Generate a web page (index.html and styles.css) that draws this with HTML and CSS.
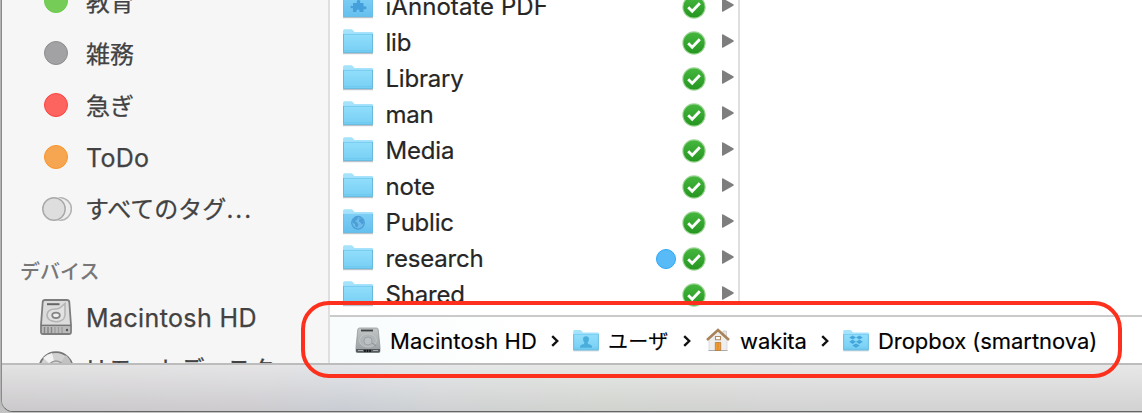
FILE: index.html
```html
<!DOCTYPE html>
<html lang="ja">
<head>
<meta charset="utf-8">
<title>Finder</title>
<link rel="stylesheet" href="styles.css">
</head>
<body>
<svg class="defs" aria-hidden="true">
  <defs>
    <linearGradient id="fg" x1="0" y1="0" x2="0" y2="1"><stop offset="0" stop-color="#92defb"/><stop offset="1" stop-color="#75cff4"/></linearGradient>
    <linearGradient id="fb" x1="0" y1="0" x2="0" y2="1"><stop offset="0" stop-color="#7ccef5"/><stop offset="1" stop-color="#65c0ee"/></linearGradient>
    <linearGradient id="gg" x1="0" y1="0" x2="0" y2="1"><stop offset="0" stop-color="#45b63d"/><stop offset="1" stop-color="#259620"/></linearGradient>
    <linearGradient id="metal" x1="0" y1="0" x2="0" y2="1"><stop offset="0" stop-color="#c2c6c7"/><stop offset="1" stop-color="#989d9e"/></linearGradient>
    <symbol id="folder" viewBox="0 0 32 27">
      <path d="M1 25.5h30" stroke="#b9c3c9" stroke-width="1.4"/>
      <path d="M1 3Q1 1.3 2.5 1.3H9Q10.2 1.3 11 2.3L12.4 4H30Q31 4 31 5V24.5H1Z" fill="#a5e2fc"/>
      <path d="M1 6.2H31V24Q31 25 30 25H2Q1 25 1 24Z" fill="url(#fg)"/>
      <path d="M1.5 6V24.4H30.5V6" fill="none" stroke="#68b9de"/><path d="M2 6.4H30M2 22.5H30" stroke="#6ec6ed" stroke-width=".8"/>
    </symbol>
    <symbol id="check" viewBox="0 0 24 24">
      <circle cx="12" cy="12" r="11.7" fill="#9bd494"/><circle cx="12" cy="12" r="10.6" fill="url(#gg)"/>
      <path d="M6.2 12.3l4 3.9 7.6-7.9" fill="none" stroke="#fff" stroke-width="2.9"/>
    </symbol>
    <symbol id="arrow" viewBox="0 0 12 14"><path d="M0 .7Q0 0 .8.3L11.3 6.3Q12.2 7 11.3 7.7L.8 13.7Q0 14 0 13.3Z" fill="#7e7e7e"/></symbol>
    <symbol id="chev" viewBox="0 0 8 12"><path d="M1.2 1.2L6.2 6 1.2 10.8" fill="none" stroke="#111" stroke-width="2.4"/></symbol>
  </defs>
</svg>
<div class="window">
  <div class="panes">
    <aside class="sidebar">
      <div class="item"><i class="tag green"></i><span class="cjk">教育</span></div>
      <div class="item"><i class="tag gray"></i><span class="cjk">雑務</span></div>
      <div class="item"><i class="tag red"></i><span class="cjk">急ぎ</span></div>
      <div class="item"><i class="tag orange"></i><span class="todo">ToDo</span></div>
      <div class="item"><svg class="alltags" viewBox="0 0 30 24"><circle cx="18.2" cy="12" r="11.2" fill="#ececec" stroke="#b2b2b2" stroke-width="1.5"/><circle cx="12" cy="12" r="12.5" fill="#f6f6f6"/><circle cx="12" cy="12" r="11.2" fill="#dedede" stroke="#a9a9a9" stroke-width="1.5"/></svg><span class="cjk all">すべてのタグ<span class="dots">...</span></span></div>
      <div class="heading">デバイス</div>
      <div class="item device">
        <svg class="drive" viewBox="0 0 32 36"><path d="M5 1H27Q29 1 29.3 3L31 26V33Q31 35 29 35H3Q1 35 1 33V26L2.7 3Q3 1 5 1Z" fill="#dcdcdc" stroke="#7d7d7d" stroke-width="1.8"/><path d="M1 26.5H31" stroke="#777" stroke-width="1.8"/><path d="M2 27.5H30V34H2Z" fill="#b9b9b9"/><path d="M4.5 28V34M8 28V34M11.5 28V34" stroke="#858585" stroke-width="1.4"/><path d="M15 28V34M18.5 28V34M22 28V34" stroke="#9a9a9a" stroke-width="1.2"/><path d="M7 5.2H19.5" stroke="#666" stroke-width="2"/><path d="M25 4.5V16Q24.5 22.5 16 22.8Q7 22 7 16Q7.5 9.8 16 10Q19 10 21 8Z" fill="#e2e2e2" stroke="#b4b4b4" stroke-width="1.6"/><ellipse cx="16" cy="16.3" rx="3.8" ry="2.7" fill="#eee" stroke="#858585" stroke-width="1.8"/><circle cx="27" cy="31" r="1.2" fill="#555"/></svg>
        <span class="hd">Macintosh HD</span></div>
      <div class="item device remote">
        <svg class="disc" viewBox="0 0 36 36"><circle cx="18" cy="18" r="16.8" fill="#d1d1d1" stroke="#777" stroke-width="1.8"/><path d="M18 18L5 7Q9 3 14 2Z" fill="#f2f2f2"/><path d="M18 18L28 4Q32 8 33 12Z" fill="#c2c2c2"/><circle cx="18" cy="18" r="8" fill="#d8d8d8" stroke="#999" stroke-width="1.5"/><circle cx="18" cy="18" r="5" fill="#f6f6f6" stroke="#888" stroke-width="1.5"/></svg>
        <span class="cjk">リモートディスク</span></div>
    </aside>
    <main class="browser">
      <div class="columns">
        <div class="files">
          <div class="row"><svg class="folder" viewBox="0 0 32 27"><use href="#folder"/><path d="M1.5 6H30.5V24.4H1.5Z" fill="url(#fb)"/><path d="M11 11h4q-1-3 1.5-3t1.5 3h3.5v3.5q3-1 3 1.2t-3 1.3V20h-4q.5-2.5-1.5-2.5T14.5 20H11v-4q-2.5 1-2.5-1T11 14.2Z" fill="#459fdb"/></svg><span class="name first">iAnnotate PDF</span><svg class="ok"><use href="#check"/></svg><svg class="arrow"><use href="#arrow"/></svg></div>
          <div class="row"><svg class="folder"><use href="#folder"/></svg><span class="name">lib</span><svg class="ok"><use href="#check"/></svg><svg class="arrow"><use href="#arrow"/></svg></div>
          <div class="row"><svg class="folder"><use href="#folder"/></svg><span class="name">Library</span><svg class="ok"><use href="#check"/></svg><svg class="arrow"><use href="#arrow"/></svg></div>
          <div class="row"><svg class="folder"><use href="#folder"/></svg><span class="name">man</span><svg class="ok"><use href="#check"/></svg><svg class="arrow"><use href="#arrow"/></svg></div>
          <div class="row"><svg class="folder"><use href="#folder"/></svg><span class="name">Media</span><svg class="ok"><use href="#check"/></svg><svg class="arrow"><use href="#arrow"/></svg></div>
          <div class="row"><svg class="folder"><use href="#folder"/></svg><span class="name">note</span><svg class="ok"><use href="#check"/></svg><svg class="arrow"><use href="#arrow"/></svg></div>
          <div class="row"><svg class="folder" viewBox="0 0 32 27"><use href="#folder"/><path d="M1.5 6.5H30.5V24.4H1.5Z" fill="url(#fb)"/><circle cx="16" cy="14.800" r="6.300" fill="#6dbbea" stroke="#4a9fd6" stroke-width="1.300"/><path d="M10.500 12L14 9l2 .5-1 2.500-2 1 2 1.500 1.500 2-1.500 3-1.500-.5-.5-3-2.500-1.500ZM17.500 10l3.500 1.500.8 3.500-2 1.500-1.300-2-1.500-1Z" fill="#4a9fd6"/></svg><span class="name">Public</span><svg class="ok"><use href="#check"/></svg><svg class="arrow"><use href="#arrow"/></svg></div>
          <div class="row"><svg class="folder"><use href="#folder"/></svg><span class="name">research</span><i class="dot"></i><svg class="ok"><use href="#check"/></svg><svg class="arrow"><use href="#arrow"/></svg></div>
          <div class="row"><svg class="folder"><use href="#folder"/></svg><span class="name">Shared</span><svg class="ok"><use href="#check"/></svg><svg class="arrow"><use href="#arrow"/></svg></div>
        </div>
      </div>
      <nav class="path">
        <svg class="pdrive" viewBox="0 0 26 26"><path d="M4.500 1H21.500Q23 1 23.200 2.500L25 20V24Q25 25.500 23.500 25.500H2.500Q1 25.500 1 24V20L2.800 2.500Q3 1 4.500 1Z" fill="url(#metal)" stroke="#92999b" stroke-width=".8"/><path d="M6 3.500H18" stroke="#3c4041" stroke-width="1.800"/><ellipse cx="13" cy="13.500" rx="8.500" ry="6.500" fill="#b0b6b7" stroke="#c4c9ca" stroke-width=".8"/><circle cx="13" cy="14" r="4" fill="#bcc1c2" stroke="#979d9f" stroke-width=".8"/><path d="M17 16L21 19" stroke="#8a9092" stroke-width="1"/><path d="M1 22H25V24Q25 25.500 23.500 25.500H2.500Q1 25.500 1 24Z" fill="#555b5d"/><path d="M3 23.500H8M18 23.500H23" stroke="#a8adae"/><path d="M10 22.700V25M12.500 22.700V25M15 22.700V25" stroke="#111" stroke-width="1.500"/></svg>
        <span class="phd">Macintosh HD</span>
        <svg class="chev c1"><use href="#chev"/></svg>
        <svg class="pfolder" viewBox="0 0 32 27"><use href="#folder"/><path d="M9 22V20.500Q9 18.500 13.500 17.500L14.200 16Q12.200 14 12.500 11Q12.800 8.500 16 8.500T19.500 11Q19.800 14 17.800 16L18.500 17.500Q23 18.500 23 20.500V22Z" fill="#4aaedb"/></svg>
        <span class="pusers">ユーザ</span>
        <svg class="chev c2"><use href="#chev"/></svg>
        <svg class="house" viewBox="0 0 24 24"><path d="M17 3H20.500V10H17Z" fill="#e8e8e8" stroke="#c4c4c4" stroke-width=".7"/><path d="M3 11L12 3 21 11V22.500H3Z" fill="#eeeeef" stroke="#cfcfcf" stroke-width=".6"/><path d="M2.500 22.500H21.500" stroke="#aaa"/><path d="M1 12L12 2 23 12" fill="none" stroke="#a98359" stroke-width="2.600"/><path d="M9.500 8.500H14.500V11.800H9.500Z" fill="#fff" stroke="#ae8d66" stroke-width="1.100"/><path d="M9.300 14.500H14.700V22.500H9.300Z" fill="#f29b30" stroke="#b47b3b" stroke-width=".8"/><path d="M12 14.500V22" stroke="#cf8127" stroke-width=".7"/></svg>
        <span class="pwakita">wakita</span>
        <svg class="chev c3"><use href="#chev"/></svg>
        <svg class="pfolder" viewBox="0 0 32 27"><use href="#folder"/><path d="M12 7.500l4 2.400-4 2.500-4-2.500ZM20 7.500l4 2.400-4 2.500-4-2.500ZM12 12.700l4 2.400-4 2.500-4-2.500ZM20 12.700l4 2.400-4 2.500-4-2.500ZM16 17l4.500 2.300L16 22l-4.500-2.700Z" fill="#45a6dc"/></svg>
        <span class="pdrop">Dropbox (smartnova)</span>
      </nav>
    </main>
  </div>
  <footer class="status"></footer>
</div>
<div class="highlight"></div>
</body>
</html>
```
FILE: styles.css
```css
* { box-sizing: border-box; }
html, body { margin: 0; height: 413px; overflow: hidden; }
body { background: linear-gradient(#b4b4b4, #b4b4b4 395px, #c4c4c4); font-family: Inter, "Noto Sans CJK JP", sans-serif; position: relative; }
svg { display: block; flex: none; }
.defs { position: absolute; width: 0; height: 0; }
.window { height: 412px; margin-left: 1px; border-left: 1px solid #8b8b8b; border-bottom: 1px solid #666; border-bottom-left-radius: 12px; overflow: hidden; background: #d5d5d6; }
.panes { display: flex; height: 363px; }
.sidebar { width: 328px; flex: none; border-right: 2px solid #dfdfdf; background: #f6f6f6; overflow: hidden; color: #424242; font-size: 25px; }
.item { display: flex; align-items: center; height: 52px; padding-left: 42px; white-space: nowrap; }
.item:first-child { margin-top: -25px; }
.item > span { line-height: 36px; -webkit-text-stroke: .25px; }
.item .todo, .item .hd { padding-top: 2px; }
.hd { letter-spacing: .38px; }
.todo { letter-spacing: .3px; }
.cjk { font-family: "Noto Sans CJK JP", sans-serif; font-size: 24px; }
.item .all { margin-left: -1px; }
.dots { font-family: Inter, sans-serif; letter-spacing: 2px; }
.remote .cjk { letter-spacing: .15px; margin-top: -2px; }
.tag { width: 24px; height: 24px; border-radius: 50%; border: 1.5px solid; margin-right: 18px; flex: none; }
.green { background: #75cd58; border-color: #67cb4a; }
.gray { background: #a2a2a4; border-color: #8d8d90; }
.red { background: #fd645f; border-color: #fd433e; }
.orange { background: #f6a550; border-color: #fa9528; }
.alltags { width: 30px; height: 24px; margin: 0 14px 0 0; }
.item .alltags { margin-left: -2px; }
.heading { height: 56px; padding: 18px 0 0 18px; font: 500 20px/36px "Noto Sans CJK JP", sans-serif; color: #777; }
.drive { width: 32px; height: 36px; margin: 0 14px 0 -4px; }
.disc { width: 36px; height: 36px; margin: 0 10px 0 -6px; }
.browser { flex: 1; min-width: 0; display: flex; flex-direction: column; background: #fff; }
.columns { height: 315px; overflow: hidden; }
.files { width: 410px; height: 315px; border-right: 2px solid #dfdfdf; }
.row { display: flex; align-items: center; height: 36px; padding: 0 4px 0 13px; }
.row:first-child { margin-top: -12px; }
.folder { width: 32px; height: 27px; margin: -1px 11.500px 0 -1px; }
.name { flex: 1; font-size: 24px; line-height: 34px; padding-top: 2px; letter-spacing: -.2px; color: #262626; white-space: nowrap; -webkit-text-stroke: .2px; }
.first { letter-spacing: .05px; }
.dot { width: 20px; height: 20px; border-radius: 50%; border: 1.5px solid #2ba8f5; background: #58bbf8; margin: 2px 6px 0 0; }
.ok { width: 24px; height: 24px; margin: 2px 16px 0 0; }
.arrow { width: 12px; height: 14px; margin-top: -2px; }
.path { height: 48px; border-top: 2px solid #cacaca; padding-left: 25px; display: flex; align-items: center; background: linear-gradient(90deg, #f8fcfd, #fff 200px); font-size: 22px; line-height: 32px; color: #000; white-space: nowrap; }
.path span { flex: none; padding-top: 1px; -webkit-text-stroke: .15px; }
.pdrive { width: 26px; height: 26px; margin-right: 9px; }
.phd { width: 161px; letter-spacing: .05px; }
.chev { width: 8px; height: 12px; margin-top: 2px; }
.c1 { margin-right: 13px; }
.pfolder { width: 28px; height: 23px; margin-right: 8px; }
.path .pusers { width: 75px; font-family: "Noto Sans CJK JP", sans-serif; font-size: 20px; letter-spacing: .3px; }
.c2 { margin-right: 15px; }
.house { width: 24px; height: 24px; margin-right: 10px; }
.pwakita { width: 81px; letter-spacing: -.1px; }
.c3 { margin-right: 13px; }
.pdrop { letter-spacing: -.06px; }
.status { height: 48px; border-top: 2px solid #bcbcbc; background: linear-gradient(rgba(255,255,255,.48), rgba(255,255,255,0)), linear-gradient(90deg, #cbc9cb, #cdcbce 250px, #c9cdd3 340px, #cfd1d3 440px, #d0d3ce 600px, #d2d2d3 850px); }
.highlight { position: absolute; left: 301px; top: 301px; width: 821px; height: 77px; border: 4px solid #fc301c; border-radius: 28px; }
```
